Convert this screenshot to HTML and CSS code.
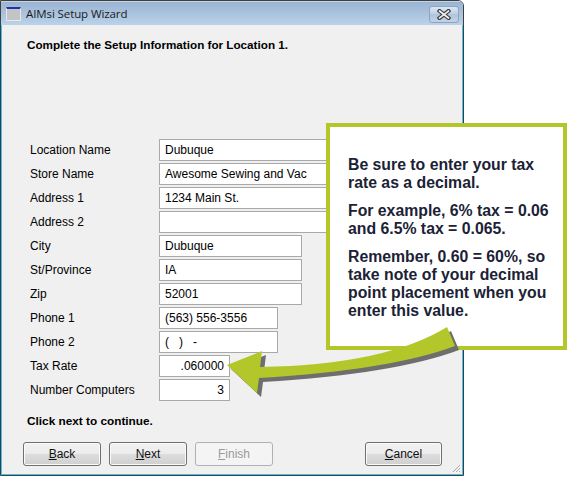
FILE: index.html
```html
<!DOCTYPE html>
<html>
<head>
<meta charset="utf-8">
<title>AIMsi Setup Wizard</title>
<link rel="stylesheet" href="styles.css">
</head>
<body>
<div class="window">
  <div class="titlebar">
    <span class="app-icon"></span>
    <span class="title">AIMsi Setup Wizard</span>
    <span class="close">
      <svg width="14" height="11" viewBox="0 0 14 11"><path d="M2.5,2 L11.5,9 M11.5,2 L2.5,9" stroke="#3e3e3e" stroke-width="4" stroke-linecap="square" fill="none"/><path d="M2.5,2 L11.5,9 M11.5,2 L2.5,9" stroke="#f4f4f4" stroke-width="1.6" stroke-linecap="square" fill="none"/></svg>
    </span>
  </div>
  <div class="content">
    <div class="heading">Complete the Setup Information for Location 1.</div>
    <div class="form">
      <span class="label">Location Name</span><span class="field w-long">Dubuque</span>
      <span class="label">Store Name</span><span class="field w-long">Awesome Sewing and Vac</span>
      <span class="label">Address 1</span><span class="field w-long">1234 Main St.</span>
      <span class="label">Address 2</span><span class="field w-long"></span>
      <span class="label">City</span><span class="field w-mid">Dubuque</span>
      <span class="label">St/Province</span><span class="field w-mid">IA</span>
      <span class="label">Zip</span><span class="field w-mid">52001</span>
      <span class="label">Phone 1</span><span class="field w-phone">(563) 556-3556</span>
      <span class="label">Phone 2</span><span class="field w-phone pre">(   )   -</span>
      <span class="label">Tax Rate</span><span class="field w-short num">.060000</span>
      <span class="label">Number Computers</span><span class="field w-short num">3</span>
    </div>
    <div class="hint">Click next to continue.</div>
    <div class="buttons">
      <span class="btn"><u>B</u>ack</span>
      <span class="btn"><u>N</u>ext</span>
      <span class="btn disabled"><u>F</u>inish</span>
      <span class="btn cancel"><u>C</u>ancel</span>
    </div>
    <span class="grip">
      <svg width="10" height="10" viewBox="0 0 10 10"><path d="M9,2 L2,9 M9,5 L5,9 M9,8 L8,9" stroke="#a8a8a8" stroke-width="1" fill="none"/><path d="M10,3 L3,10 M10,6 L6,10" stroke="#ffffff" stroke-width="1" fill="none"/></svg>
    </span>
  </div>
</div>

<div class="callout">
  <p>Be sure to enter your tax<br>rate as a decimal.</p>
  <p>For example, 6% tax = 0.06<br>and 6.5% tax = 0.065.</p>
  <p>Remember, 0.60 = 60%, so<br>take note of your decimal<br>point placement when you<br>enter this value.</p>
</div>

<svg class="arrow" width="577" height="478" viewBox="0 0 577 478">
  <path transform="translate(4,4)" fill="#6e6e6e" d="M227,365 L262,351 L260,367 Q385,365 447,327 L455,346 Q391,370 259,378 L257,393 Z"/>
  <path fill="#b3c72a" d="M227,365 L262,351 L260,367 Q385,365 447,327 L455,346 Q391,370 259,378 L257,393 Z"/>
</svg>
</body>
</html>
```
FILE: styles.css
```css
html, body {
  margin: 0;
  padding: 0;
  background: #ffffff;
}
body {
  width: 577px;
  height: 478px;
  position: relative;
  overflow: hidden;
  font-family: "Liberation Sans", Arial, sans-serif;
  color: #000;
}
.window {
  width: 464px;
  height: 476px;
  box-sizing: border-box;
  border: 1px solid #3f3f3f;
  border-top-right-radius: 6px;
  display: flex;
  flex-direction: column;
  background: #f0f0f0;
  overflow: hidden;
}
.titlebar {
  height: 24px;
  flex: none;
  display: flex;
  align-items: center;
  background: linear-gradient(#9ab4d2, #bad2ea);
  border-top: 1px solid #c4d5e8;
  box-sizing: border-box;
  position: relative;
}
.app-icon {
  width: 13px;
  height: 11px;
  margin-left: 5px;
  background: #c4c4c4;
  border: 1px solid #e8e8e8;
  border-top: 2px solid #1f34a8;
  box-sizing: content-box;
}
.title {
  margin-left: 5px;
  font-size: 11.5px;
  color: #1a1a1a;
  font-family: "Open Sans", "Liberation Sans", sans-serif;
  letter-spacing: -0.1px;
}
.close {
  position: absolute;
  right: 4px;
  top: 4px;
  width: 30px;
  height: 17px;
  box-sizing: border-box;
  border: 1px solid #8ea4bf;
  border-radius: 3px;
  background: linear-gradient(#dbe6f2, #bccee3 50%, #b0c4dc 50%, #c0d2e6);
  display: flex;
  align-items: center;
  justify-content: center;
}
.close svg { display: block; }
.content {
  flex: 1;
  position: relative;
  border: 1px solid #43c3ec;
  border-top: none;
  display: flex;
  flex-direction: column;
}
.heading {
  margin: 13px 0 0 25px;
  font-size: 11.7px;
  line-height: 14px;
  font-weight: bold;
  color: #000;
}
.form {
  margin: 87px 0 0 28px;
  display: grid;
  grid-template-columns: 129px auto;
  grid-auto-rows: 22px;
  row-gap: 2px;
}
.label {
  align-self: center;
  font-size: 12px;
  line-height: 14px;
  color: #000;
}
.field {
  box-sizing: border-box;
  height: 22px;
  border: 1px solid #a9a9a9;
  background: #ffffff;
  padding: 0 5px;
  font-size: 12px;
  line-height: 20px;
  color: #000;
  white-space: nowrap;
}
.pre { white-space: pre; }
.w-long { width: 210px; }
.w-mid { width: 143px; }
.w-phone { width: 119px; }
.w-short { width: 71px; }
.num { text-align: right; }
.hint {
  margin: 13px 0 0 25px;
  font-size: 11.8px;
  line-height: 14px;
  font-weight: bold;
  color: #000;
}
.buttons {
  margin: 14px 0 0 21px;
  display: flex;
  gap: 8px;
}
.btn {
  width: 78px;
  height: 24px;
  box-sizing: border-box;
  border: 1px solid #707070;
  border-radius: 3px;
  background: linear-gradient(#f2f2f2 0%, #ebebeb 50%, #dddddd 50%, #cfcfcf 100%);
  box-shadow: inset 0 0 0 1px #fbfbfb;
  font-size: 12px;
  line-height: 22px;
  text-align: center;
  color: #111;
}
.btn.disabled {
  border-color: #adb2b5;
  background: #f4f4f4;
  box-shadow: none;
  color: #9a9a9a;
}
.btn.cancel {
  margin-left: 84px;
  width: 77px;
}
.grip {
  position: absolute;
  right: 1px;
  bottom: 1px;
  width: 10px;
  height: 10px;
}
.grip svg { display: block; }
.callout {
  position: absolute;
  left: 326px;
  top: 123px;
  width: 241px;
  height: 227px;
  box-sizing: border-box;
  border: 4px solid #b3c72a;
  background: #ffffff;
  padding: 29px 0 0 18px;
  font-size: 15.8px;
  line-height: 18px;
  font-weight: bold;
  color: #1b2236;
}
.callout p {
  margin: 0 0 10px 0;
}
.arrow {
  position: absolute;
  left: 0;
  top: 0;
  pointer-events: none;
}
```
